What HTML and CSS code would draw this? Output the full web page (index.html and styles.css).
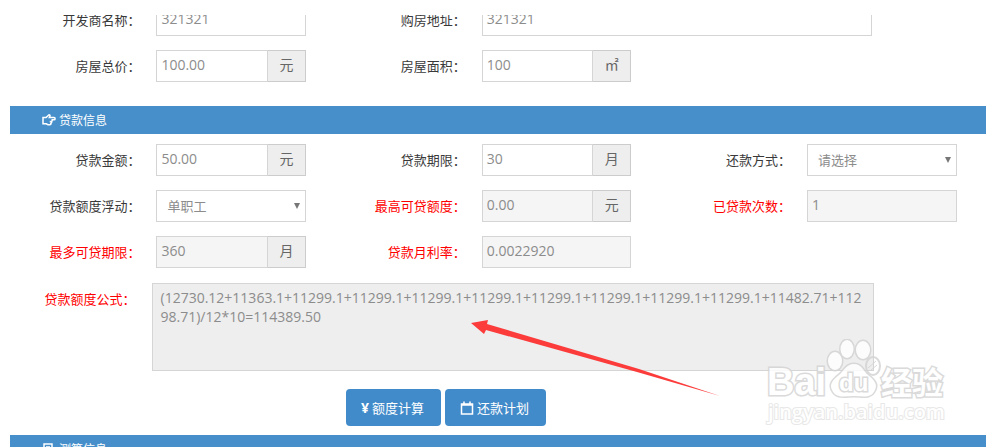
FILE: index.html
```html
<!DOCTYPE html>
<html lang="zh-CN">

<head>
    <meta charset="UTF-8">
    <meta name="viewport" content="width=device-width, initial-scale=1.0">
    <title>贷款信息</title>
    <link rel="stylesheet" href="styles.css">
</head>

<body>
    <div class="page">
        <form class="content">
            <div class="rows">
                <div class="field">
                    <label for="developer">开发商名称：</label>
                    <div class="control"><input type="text" id="developer" value="321321"></div>
                </div>
                <div class="field wide">
                    <label for="address">购房地址：</label>
                    <div class="control"><input type="text" id="address" value="321321"></div>
                </div>
                <div class="field">
                    <label for="total">房屋总价：</label>
                    <div class="control"><input type="text" id="total" value="100.00"><span class="addon">元</span></div>
                </div>
                <div class="field">
                    <label for="area">房屋面积：</label>
                    <div class="control"><input type="text" id="area" value="100"><span class="addon">㎡</span></div>
                </div>
            </div>

            <h5 class="bar">
                <svg width="14" height="12" viewBox="0 0 14 12">
                    <path d="M1 3.500h3L6.500 1.200c1-.8 1.900.2 1.300 1.300l-.5 1H12c1.500 0 1.500 2.300 0 2.300H9.500c1 .2.900 1.700-.2 1.800.6.400.4 1.500-.5 1.600.4.800-.2 1.500-1 1.500H6L4.200 9.800H1z" />
                </svg>
                贷款信息
            </h5>

            <div class="rows">
                <div class="field">
                    <label for="amount">贷款金额：</label>
                    <div class="control"><input type="text" id="amount" value="50.00"><span class="addon">元</span></div>
                </div>
                <div class="field">
                    <label for="term">贷款期限：</label>
                    <div class="control"><input type="text" id="term" value="30"><span class="addon">月</span></div>
                </div>
                <div class="field">
                    <label for="repay">还款方式：</label>
                    <div class="control select">
                        <select id="repay">
                            <option>请选择</option>
                        </select>
                    </div>
                </div>
                <div class="field">
                    <label for="float">贷款额度浮动：</label>
                    <div class="control select">
                        <select id="float">
                            <option>单职工</option>
                        </select>
                    </div>
                </div>
                <div class="field red">
                    <label for="max-amount">最高可贷额度：</label>
                    <div class="control"><input type="text" id="max-amount" value="0.00" readonly><span class="addon">元</span></div>
                </div>
                <div class="field red">
                    <label for="times">已贷款次数：</label>
                    <div class="control"><input type="text" id="times" value="1" readonly></div>
                </div>
                <div class="field red">
                    <label for="max-term">最多可贷期限：</label>
                    <div class="control"><input type="text" id="max-term" value="360" readonly><span class="addon">月</span></div>
                </div>
                <div class="field red">
                    <label for="rate">贷款月利率：</label>
                    <div class="control"><input type="text" id="rate" value="0.0022920" readonly></div>
                </div>
            </div>

            <div class="formula red">
                <label for="formula">贷款额度公式：</label>
                <textarea id="formula" readonly>(12730.12+11363.1+11299.1+11299.1+11299.1+11299.1+11299.1+11299.1+11299.1+11299.1+11482.71+11298.71)/12*10=114389.50</textarea>
            </div>

            <div class="buttons">
                <button type="button"><span class="yen">¥</span>额度计算</button>
                <button type="button">
                    <svg width="14" height="14" viewBox="0 0 14 14">
                        <path d="M1.500 3h11v10h-11zM1.500 4h11M4 .5v3M10 .5v3" />
                    </svg>
                    还款计划
                </button>
            </div>

            <h5 class="bar">
                <svg width="14" height="12" viewBox="0 0 14 12">
                    <path d="M2 1h8v10H2zM4 4h4M4 7h4" />
                </svg>
                测算信息
            </h5>
        </form>

        <svg class="arrow" width="250" height="78" viewBox="0 0 250 78">
            <path d="M0 4L17 1 16 5 168 50 249 77 166 53 15 11 13 15z" />
        </svg>

        <svg class="watermark" width="190" height="92" viewBox="0 0 190 92">
            <g class="logo">
                <text x="5" y="56" font-size="38">Bai</text>
                <ellipse cx="73" cy="22" rx="7" ry="9" />
                <ellipse cx="85" cy="10" rx="6.500" ry="9" />
                <ellipse cx="101" cy="11" rx="7" ry="9" />
                <ellipse class="clear" cx="111" cy="27" rx="7" ry="9" />
                <path class="lines" d="M106 29l8-7M109 31l6-5" />
                <path d="M92 25c8 0 9 7 14 11 6 5 10 9 7 15-4 9-12 6-21 6s-18 3-22-6c-3-6 1-10 7-15 5-4 7-11 15-11z" />
                <text class="du" x="77" y="52" font-size="24">du</text>
                <text class="cn" x="119" y="55" font-size="31">经验</text>
            </g>
            <text class="url" x="6" y="80" font-size="20">jingyan.baidu.com</text>
        </svg>
    </div>
</body>

</html>
```
FILE: styles.css
```css
body {
    margin: 0;
    background-color: #fff;
    font-family: "Open Sans", "Noto Sans CJK SC", sans-serif;
    font-size: 13px;
    color: #393939;
}

.page {
    position: relative;
    height: calc(100vh - 15px);
    margin: 15px 14px 0 10px;
    overflow: hidden;
}

/* the form is scrolled a little way past its first row */
.content {
    margin-top: -11px;
}

.rows {
    display: grid;
    grid-template-columns: repeat(3, minmax(0, 1fr));
    row-gap: 14px;
}

.field {
    display: grid;
    grid-template-columns: 45% 46%;
}

.field.wide {
    grid-column: span 2;
    grid-template-columns: 22.5% 60%;
}

label {
    padding-right: 16px;
    line-height: 32px;
    text-align: right;
    white-space: nowrap;
}

.red label {
    color: #f00;
}

.control {
    position: relative;
    display: flex;
    height: 32px;
}

input,
select,
textarea {
    box-sizing: border-box;
    min-width: 0;
    margin: 0;
    border: 1px solid #d5d5d5;
    border-radius: 0;
    background-color: #fff;
    color: #8c8c8c;
    font-family: inherit;
    font-size: 14px;
    outline: none;
}

input {
    flex: 1;
    padding: 0 4px 4px;
}

input[readonly] {
    background-color: #f5f5f5;
}

.addon {
    box-sizing: border-box;
    width: 38px;
    border: 1px solid #ccc;
    border-left: 0;
    background-color: #eee;
    color: #666;
    font-size: 14px;
    line-height: 28px;
    text-align: center;
}

select {
    flex: 1;
    padding: 0 10px;
    appearance: none;
    font-size: 13px;
}

.select::after {
    content: "";
    position: absolute;
    top: 13px;
    right: 6px;
    border: 3px solid transparent;
    border-top: 6px solid #777;
    border-bottom: 0;
}

.bar {
    display: flex;
    align-items: center;
    gap: 3px;
    height: 28px;
    margin: 24px 0 10px;
    padding-left: 32px;
    background-color: #478fca;
    color: #fff;
    font-size: 12px;
    font-weight: normal;
}

.bar svg,
.buttons svg {
    fill: none;
    stroke: #fff;
    stroke-width: 1.5;
}

.formula {
    display: grid;
    grid-template-columns: 14.5% 74%;
    margin-top: 15px;
}

textarea {
    height: 88px;
    padding: 4px 8px;
    background-color: #eee;
    line-height: 19px;
    resize: none;
    word-break: break-all;
}

.buttons {
    display: flex;
    gap: 4px;
    margin-top: 18px;
    padding-left: 336px;
}

.buttons + .bar {
    margin-top: 9px;
}

button {
    display: flex;
    align-items: center;
    gap: 3px;
    height: 37px;
    padding: 0 17px 0 15px;
    border: 0;
    border-radius: 4px;
    background-color: #428bca;
    color: #fff;
    font-family: inherit;
    font-size: 13px;
}

.yen {
    font-size: 14px;
    font-weight: bold;
}

.arrow {
    position: absolute;
    top: 304px;
    left: 461px;
    fill: #fc3b3b;
    pointer-events: none;
}

.watermark {
    position: absolute;
    right: 34px;
    bottom: 16px;
    fill: #fff;
    stroke: #d4d4d4;
    stroke-width: 3;
    paint-order: stroke;
    pointer-events: none;
    opacity: 0.85;
}

.watermark text {
    font-family: "Liberation Sans", sans-serif;
    font-weight: bold;
}

.watermark .clear {
    fill: none;
    stroke-width: 2;
}

.watermark .lines {
    stroke-width: 1;
}

.watermark .cn {
    font-family: "Noto Sans CJK SC", sans-serif;
}

.watermark .url {
    font-family: "Open Sans", sans-serif;
    font-weight: 600;
    stroke: #e4e4e4;
    stroke-width: 2;
}
```
